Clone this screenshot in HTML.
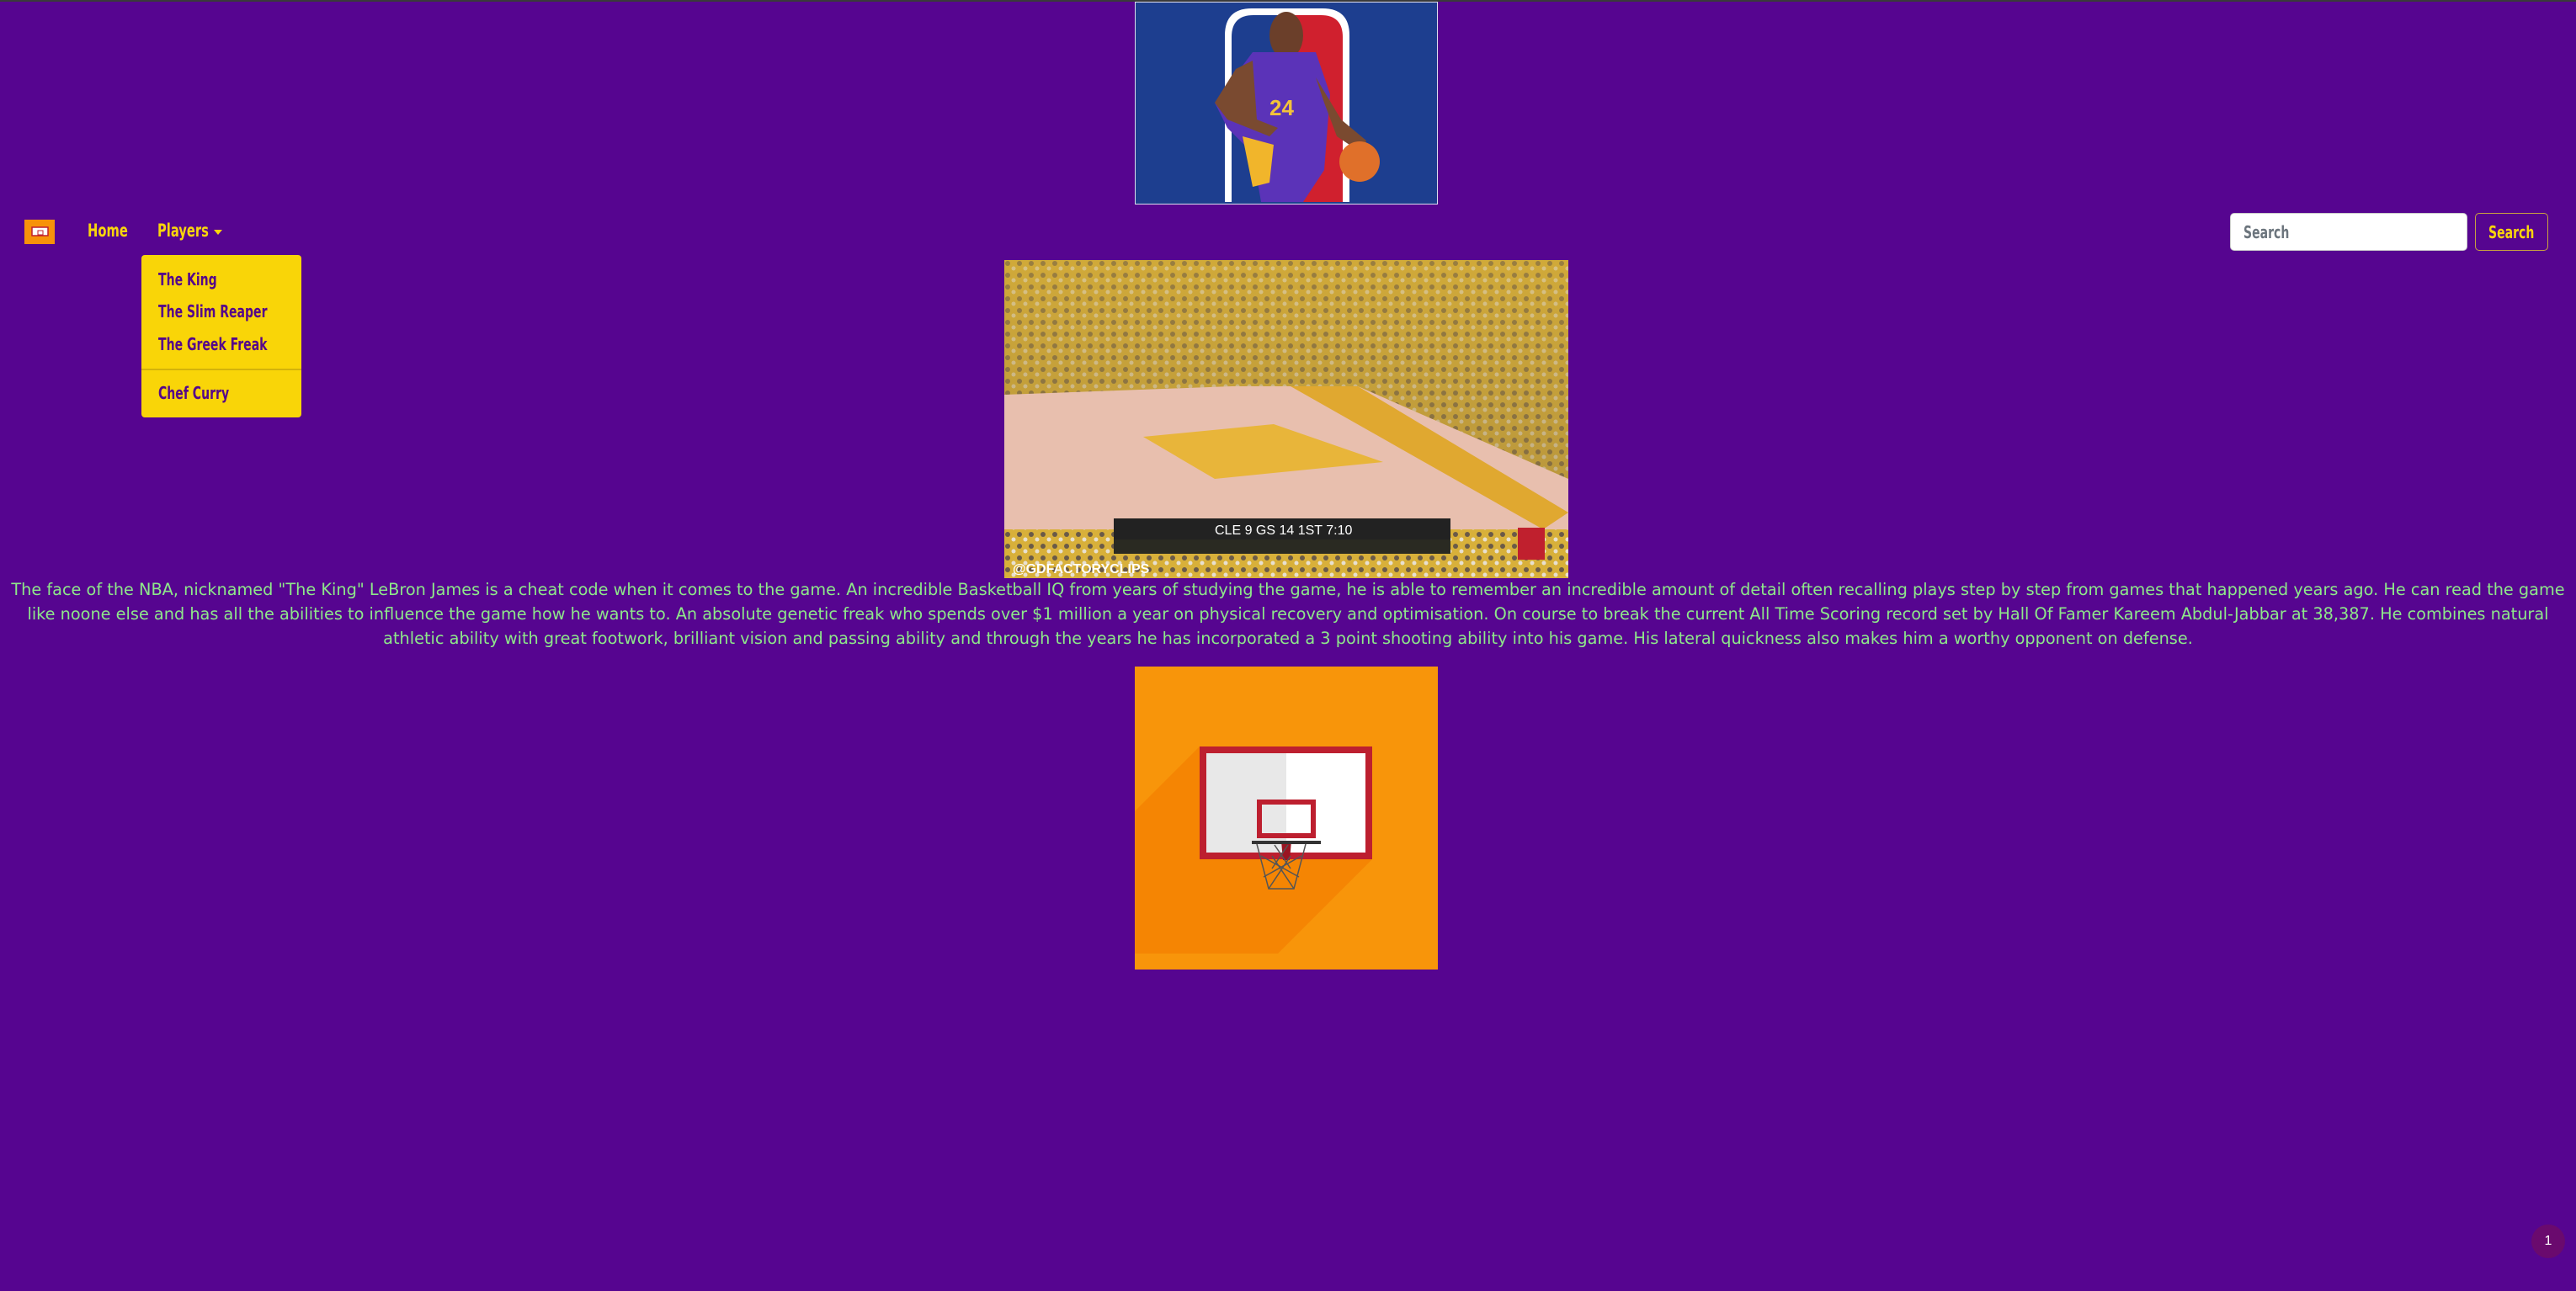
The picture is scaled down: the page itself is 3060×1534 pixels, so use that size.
<!DOCTYPE html>
<html><head><meta charset="utf-8"><style>
*{margin:0;padding:0;box-sizing:border-box}
html,body{width:3060px;height:1534px;overflow:hidden;background:#560590}
body{position:relative;font-family:"DejaVu Sans","Liberation Sans",sans-serif}
.topline{position:absolute;left:0;top:0;width:3060px;height:2px;background:#3a3a3a}
.nav{font-family:"DejaVu Sans Condensed","Liberation Sans",sans-serif;font-weight:bold;font-size:21px;position:absolute;color:#f9d50c;transform:scaleX(0.78);transform-origin:left top;white-space:nowrap}
.dd{position:absolute;left:168px;top:303px;width:190px;height:193px;background:#f9d508;border-radius:4px}
.dd div{position:absolute;left:20px;font-family:"DejaVu Sans Condensed","Liberation Sans",sans-serif;font-weight:bold;font-size:20px;color:#55078a;white-space:nowrap;transform:scaleX(0.78);transform-origin:left top}
p.t{position:absolute;left:0;top:686px;width:3060px;text-align:center;color:#8ee88a;font-size:19.3px;line-height:29px}
p.t span{white-space:nowrap;display:block}
</style></head><body>
<div class="topline"></div>
<svg style="position:absolute;left:1348px;top:2px" width="360" height="241" viewBox="0 0 360 241">
<rect x="0.5" y="0.5" width="359" height="240" fill="#1d3e8f" stroke="#dde" stroke-width="1"/>
<path d="M107 238 V40 Q107 8 139 8 H223 Q255 8 255 40 V238 Z" fill="#fff"/>
<path d="M180 16 H221 Q247 16 247 42 V238 H180 Z" fill="#d0202e"/>
<path d="M115 238 V42 Q115 16 141 16 H180 V238 Z" fill="#1d3e8f"/>
<ellipse cx="180" cy="40" rx="20" ry="28" fill="#6b3f2a"/>
<path d="M140 60 L215 60 L232 110 L225 200 L200 238 L150 238 L140 180 L110 150 L95 120 Z" fill="#5b33b8"/>
<path d="M95 120 L120 80 L140 70 L145 140 L170 150 L160 160 L110 140 Z" fill="#7a4a30"/>
<path d="M215 90 L245 140 L275 165 L270 180 L240 160 L225 120 Z" fill="#7a4a30"/>
<path d="M128 160 L165 170 L160 215 L140 220 Z" fill="#f1b52b"/>
<circle cx="267" cy="190" r="24" fill="#e0702a"/>
<text x="160" y="135" font-family="Liberation Sans" font-weight="bold" font-size="26" fill="#f3c23a">24</text>
</svg>
<svg style="position:absolute;left:29px;top:261px" width="36" height="29" viewBox="0 0 36 29">
<rect width="36" height="29" fill="#f7920a"/>
<rect x="9" y="9" width="19" height="10" fill="#fff" stroke="#c0202e" stroke-width="1.5"/>
<rect x="16" y="13" width="6" height="5" fill="none" stroke="#c0202e" stroke-width="1"/>
</svg>
<div class="nav" style="left:104px;top:262px">Home</div>
<div class="nav" style="left:187px;top:262px">Players</div>
<div style="position:absolute;left:254px;top:273px;width:0;height:0;border-left:5px solid transparent;border-right:5px solid transparent;border-top:6px solid #f9d50c"></div>
<div class="dd">
<div style="top:17px">The King</div>
<div style="top:55px">The Slim Reaper</div>
<div style="top:94px">The Greek Freak</div>
<div style="left:0;top:135px;width:190px;height:2px;background:#d4b30a;transform:none"></div>
<div style="top:152px">Chef Curry</div>
</div>
<div style="position:absolute;left:2649px;top:253px;width:282px;height:45px;background:#fff;border-radius:5px;border:1px solid #ccc"></div>
<div class="nav" style="left:2665px;top:264px;color:#6c757d;font-size:20px">Search</div>
<div style="position:absolute;left:2940px;top:253px;width:87px;height:45px;border:1.5px solid #c9a23f;border-radius:5px"></div>
<div class="nav" style="left:2956px;top:264px;font-size:20px">Search</div>
<svg style="position:absolute;left:1193px;top:309px" width="670" height="378" viewBox="0 0 670 378">
<defs><linearGradient id="cr" x1="0" y1="0" x2="0" y2="1"><stop offset="0" stop-color="#c9a338"/><stop offset="1" stop-color="#8a7040"/></linearGradient>
<pattern id="pp" width="14" height="14" patternUnits="userSpaceOnUse"><rect width="14" height="14" fill="#d8b03a"/><circle cx="4" cy="4" r="3" fill="#6a5a48"/><circle cx="11" cy="10" r="2.5" fill="#e8e0d0"/></pattern></defs>
<rect width="670" height="378" fill="url(#pp)"/>
<rect width="670" height="378" fill="url(#cr)" opacity="0.5"/>
<path d="M0 160 L270 150 L420 150 L670 260 L670 330 L0 330 Z" fill="#e8bfae"/>
<path d="M165 210 L320 195 L450 240 L250 260 Z" fill="#e8b53a"/>
<path d="M340 150 L420 150 L670 300 L640 320 Z" fill="#e0a830"/>
<rect x="0" y="320" width="670" height="58" fill="url(#pp)"/>
<rect x="130" y="307" width="400" height="42" fill="#2a2a22"/>
<rect x="130" y="307" width="400" height="25" fill="#222"/>
<text x="250" y="326" font-family="Liberation Sans" font-size="16" fill="#fff">CLE  9     GS  14  1ST 7:10</text>
<text x="10" y="372" font-family="Liberation Sans" font-weight="bold" font-size="16" fill="#fff">@GDFACTORYCLIPS</text>
<rect x="610" y="318" width="32" height="38" fill="#c0202e"/>
</svg>
<p class="t"><span>The face of the NBA, nicknamed "The King" LeBron James is a cheat code when it comes to the game. An incredible Basketball IQ from years of studying the game, he is able to remember an incredible amount of detail often recalling plays step by step from games that happened years ago. He can read the game</span><span>like noone else and has all the abilities to influence the game how he wants to. An absolute genetic freak who spends over $1 million a year on physical recovery and optimisation. On course to break the current All Time Scoring record set by Hall Of Famer Kareem Abdul-Jabbar at 38,387. He combines natural</span><span>athletic ability with great footwork, brilliant vision and passing ability and through the years he has incorporated a 3 point shooting ability into his game. His lateral quickness also makes him a worthy opponent on defense.</span></p>
<svg style="position:absolute;left:1348px;top:792px" width="360" height="360" viewBox="0 0 360 360">
<rect width="360" height="360" fill="#f8950a"/>
<path d="M77 95 L282 95 L282 229 L170 341 L0 341 L0 172 Z" fill="#f47f00" opacity="0.7"/>
<rect x="77" y="95" width="205" height="134" fill="#bd1f2f"/>
<rect x="85" y="103" width="189" height="118" fill="#fff"/>
<rect x="85" y="103" width="95" height="118" fill="#e8e8e8"/>
<rect x="145" y="158" width="70" height="46" fill="#bd1f2f"/>
<rect x="151" y="164" width="58" height="34" fill="#fff"/>
<rect x="151" y="164" width="29" height="34" fill="#e8e8e8"/>
<path d="M174 207 H186 L184 230 H176 Z" fill="#9a1522"/>
<rect x="139" y="207" width="82" height="4" fill="#333"/>
<path d="M145 211 L159 264 H189 L203 211 M159 264 L185 225 M189 264 L163 225 M150 225 L195 250 M198 225 L153 250 M166 212 L185 240 M182 212 L163 240" fill="none" stroke="#555" stroke-width="1.5"/>
</svg>
<div style="position:absolute;left:3007px;top:1455px;width:40px;height:40px;border-radius:50%;background:#6a0a6e;color:#fff;font-size:16px;text-align:center;line-height:40px;font-family:'Liberation Sans',sans-serif">1</div>
</body></html>
